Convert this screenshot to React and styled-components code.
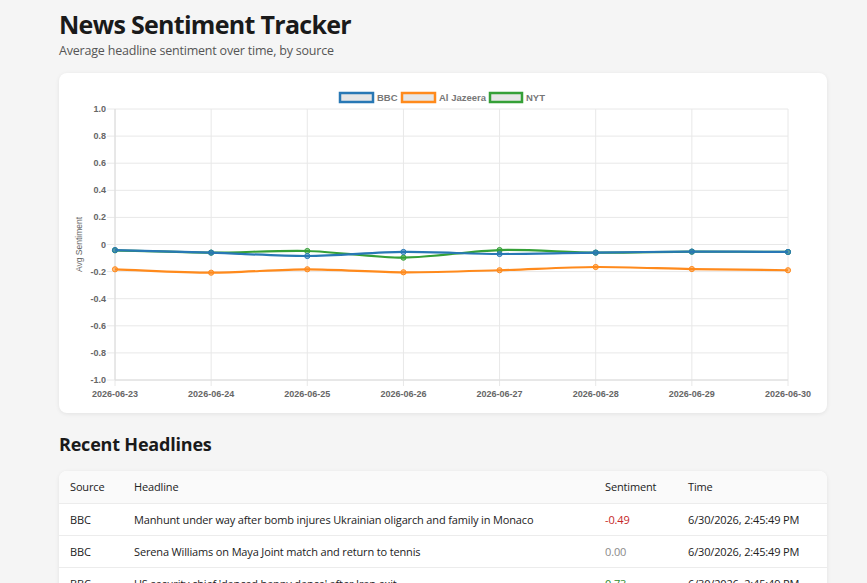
import React from 'react';
import styled, { createGlobalStyle } from 'styled-components';

const GlobalStyle = createGlobalStyle`
  html, body {
    margin: 0;
    padding: 0;
    background: #f5f5f5;
  }
  body {
    font-family: "Open Sans", "Noto Sans", sans-serif;
    color: #1f1f1f;
  }
`;

const Page = styled.div`
  padding: 6px 40px 40px 59px;
`;

const Title = styled.h1`
  margin: 0;
  font-size: 25px;
  line-height: 36px;
  font-weight: 700;
  letter-spacing: -0.7px;
  color: #1a1a1a;
`;

const Subtitle = styled.p`
  margin: 0 0 13px;
  font-size: 12.5px;
  line-height: 18px;
  letter-spacing: -0.2px;
  color: #555;
`;

const Card = styled.div`
  background: #fff;
  border-radius: 8px;
  box-shadow: 0 1px 4px rgba(0, 0, 0, 0.08);
  overflow: hidden;
`;

const SectionTitle = styled.h2`
  margin: 18px 0 14px;
  font-size: 18px;
  line-height: 26px;
  font-weight: 700;
  letter-spacing: -0.2px;
  color: #1a1a1a;
`;

const Table = styled.table`
  width: 100%;
  border-collapse: collapse;
  table-layout: fixed;
  font-size: 11px;
  letter-spacing: -0.15px;
`;

const HeadCell = styled.th`
  box-sizing: border-box;
  text-align: left;
  font-weight: 400;
  color: #222;
  background: #fafafa;
  height: 32px;
  padding: 0 11px;
  border-bottom: 1px solid #ececec;
  width: ${p => p.$w || 'auto'};
`;

const Cell = styled.td`
  height: 31px;
  padding: 0 11px;
  border-bottom: 1px solid #ececec;
  color: ${p => p.$color || '#222'};
  white-space: nowrap;
  overflow: hidden;
`;

const ChartSvg = styled.svg`
  display: block;
  font-family: "Liberation Sans", Arial, sans-serif;
`;

const dates = [
  '2026-06-23', '2026-06-24', '2026-06-25', '2026-06-26',
  '2026-06-27', '2026-06-28', '2026-06-29', '2026-06-30',
];

const series = [
  { label: 'BBC', color: '#2878b5', data: [-0.041, -0.06, -0.085, -0.055, -0.07, -0.06, -0.052, -0.055] },
  { label: 'Al Jazeera', color: '#ff8a1c', data: [-0.183, -0.208, -0.183, -0.205, -0.19, -0.166, -0.181, -0.19] },
  { label: 'NYT', color: '#35a037', data: [-0.043, -0.06, -0.048, -0.097, -0.041, -0.06, -0.053, -0.055] },
];

const headlines = [
  { source: 'BBC', title: 'Manhunt under way after bomb injures Ukrainian oligarch and family in Monaco', score: -0.49, time: '6/30/2026, 2:45:49 PM' },
  { source: 'BBC', title: 'Serena Williams on Maya Joint match and return to tennis', score: 0, time: '6/30/2026, 2:45:49 PM' },
  { source: 'BBC', title: "US security chief 'danced happy dance' after Iran exit", score: 0.73, time: '6/30/2026, 2:45:49 PM' },
];

function scoreColor(v) {
  if (v > 0.05) return '#2e8b2e';
  if (v < -0.05) return '#c62828';
  return '#8a8a8a';
}

// chart.js style spline through the points
function splinePath(pts, t = 0.3) {
  const ctrl = pts.map((p, i) => {
    const prev = pts[i - 1] || p;
    const next = pts[i + 1] || p;
    const d01 = Math.hypot(p[0] - prev[0], p[1] - prev[1]);
    const d12 = Math.hypot(next[0] - p[0], next[1] - p[1]);
    const sum = d01 + d12 || 1;
    const fa = (t * d01) / sum;
    const fb = (t * d12) / sum;
    return {
      prev: [p[0] - fa * (next[0] - prev[0]), p[1] - fa * (next[1] - prev[1])],
      next: [p[0] + fb * (next[0] - prev[0]), p[1] + fb * (next[1] - prev[1])],
    };
  });
  let d = `M${pts[0][0]},${pts[0][1]}`;
  for (let i = 1; i < pts.length; i++) {
    const a = ctrl[i - 1].next;
    const b = ctrl[i].prev;
    d += ` C${a[0]},${a[1]} ${b[0]},${b[1]} ${pts[i][0]},${pts[i][1]}`;
  }
  return d;
}

function SentimentChart() {
  const W = 768;
  const H = 340;
  const left = 56;
  const right = 729;
  const top = 36;
  const bottom = 307;
  const x = i => left + ((right - left) * i) / (dates.length - 1);
  const y = v => top + ((1 - v) / 2) * (bottom - top);
  const ticks = [1, 0.8, 0.6, 0.4, 0.2, 0, -0.2, -0.4, -0.6, -0.8, -1];
  const fmt = v => (v === 0 ? '0' : v.toFixed(1));

  const legend = [
    { label: 'BBC', color: '#2878b5', x: 281, w: 33 },
    { label: 'Al Jazeera', color: '#ff8a1c', x: 343, w: 33 },
    { label: 'NYT', color: '#35a037', x: 431, w: 32 },
  ];

  return (
    <ChartSvg width={W} height={H} viewBox={`0 0 ${W} ${H}`}>
      {legend.map(l => (
        <g key={l.label}>
          <rect x={l.x} y={20} width={l.w} height={9} fill="#e6e6e6" stroke={l.color} strokeWidth="2.5" />
          <text x={l.x + l.w + 4} y={27.5} fontSize="9.5" fill="#777" fontWeight="700">{l.label}</text>
        </g>
      ))}

      {ticks.map(v => (
        <g key={v}>
          <line x1={left - 8} x2={right} y1={y(v)} y2={y(v)} stroke="#e8e8e8" />
          <text x={left - 9} y={y(v) + 3} fontSize="9" fill="#666" fontWeight="700" textAnchor="end">{fmt(v)}</text>
        </g>
      ))}
      {dates.map((d, i) => (
        <g key={d}>
          <line x1={x(i)} x2={x(i)} y1={top} y2={bottom + 6} stroke="#e8e8e8" />
          <text x={x(i)} y={bottom + 17} fontSize="9" fill="#666" fontWeight="700" textAnchor="middle">{d}</text>
        </g>
      ))}
      <line x1={left} x2={left} y1={top} y2={bottom} stroke="#dcdcdc" />
      <line x1={left} x2={right} y1={bottom} y2={bottom} stroke="#dcdcdc" />

      <text
        transform={`translate(23 ${(top + bottom) / 2}) rotate(-90)`}
        fontSize="8.5"
        fill="#666"
        textAnchor="middle"
      >
        Avg Sentiment
      </text>

      {[...series].reverse().map(s => {
        const pts = s.data.map((v, i) => [x(i), y(v)]);
        return (
          <g key={s.label}>
            <path d={splinePath(pts)} fill="none" stroke={s.color} strokeWidth="2.2" />
            {pts.map((p, i) => (
              <circle key={i} cx={p[0]} cy={p[1]} r="2.6" fill={s.color} fillOpacity="0.55" stroke={s.color} strokeWidth="1" />
            ))}
          </g>
        );
      })}
    </ChartSvg>
  );
}

export default function App() {
  return (
    <Page>
      <GlobalStyle />
      <Title>News Sentiment Tracker</Title>
      <Subtitle>Average headline sentiment over time, by source</Subtitle>

      <Card>
        <SentimentChart />
      </Card>

      <SectionTitle>Recent Headlines</SectionTitle>
      <Card>
        <Table>
          <thead>
            <tr>
              <HeadCell $w="64px">Source</HeadCell>
              <HeadCell>Headline</HeadCell>
              <HeadCell $w="83px">Sentiment</HeadCell>
              <HeadCell $w="150px">Time</HeadCell>
            </tr>
          </thead>
          <tbody>
            {headlines.map(h => (
              <tr key={h.title}>
                <Cell>{h.source}</Cell>
                <Cell>{h.title}</Cell>
                <Cell $color={scoreColor(h.score)}>{h.score.toFixed(2)}</Cell>
                <Cell>{h.time}</Cell>
              </tr>
            ))}
          </tbody>
        </Table>
      </Card>
    </Page>
  );
}
